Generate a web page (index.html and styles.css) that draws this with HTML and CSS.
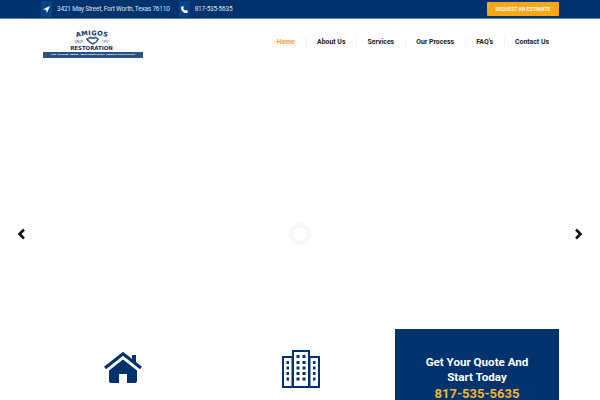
FILE: index.html
```html
<!DOCTYPE html>
<html lang="en">
<head>
  <meta charset="UTF-8">
  <meta name="viewport" content="width=device-width, initial-scale=1.0">
  <title>Amigos Restoration</title>
  <link rel="stylesheet" href="styles.css">
</head>
<body>
  <div class="topbar">
    <div class="topbar-info">
      <span class="top-icon">
        <svg width="7" height="7" viewBox="0 0 10 10"><path d="M10 0 0 4.600l4.400.9L5.600 10z" fill="#fff"/></svg>
      </span>
      <span class="top-text address">3421 May Street, Fort Worth, Texas 76110</span>
      <span class="top-icon">
        <svg width="7" height="7" viewBox="0 0 10 10"><path d="M1 .6 3 0l1.200 2.600-1 1a6 6 0 0 0 3.200 3.200l1-1L10 7l-.6 2c-.2.6-.7 1-1.400 1C3.600 10 0 6.400 0 2 0 1.300.4.800 1 .6z" fill="#fff"/></svg>
      </span>
      <span class="top-text">817-535-5635</span>
    </div>
    <a class="estimate-btn" href="#">REQUEST AN ESTIMATE</a>
  </div>

  <header class="header">
    <a class="logo" href="#">
      <svg class="logo-arc" width="40" height="12" viewBox="0 0 40 12">
        <path id="logoArc" d="M3 10.500Q20 6 37 10.500" fill="none"/>
        <text class="logo-name" text-anchor="middle"><textPath href="#logoArc" startOffset="50%">AMIGOS</textPath></text>
      </svg>
      <span class="logo-mid">
        <span class="logo-since">SINCE</span>
        <svg width="13" height="9" viewBox="0 0 15 9"><path d="M1 3 5 1l3 1 3-1 3 2-2 3-4 2.500L4 6z" fill="#fff" stroke="#3f5f86" stroke-width="1.800"/></svg>
        <span class="logo-since">1997</span>
      </span>
      <span class="logo-title">RESTORATION</span>
      <span class="logo-strip">FIRE · ICE DAM · SMOKE · MOLD REMEDIATION · GENERAL CONTRACTING</span>
    </a>
    <nav class="nav">
      <a class="nav-link active" href="#">Home</a>
      <a class="nav-link" href="#">About Us</a>
      <a class="nav-link" href="#">Services</a>
      <a class="nav-link" href="#">Our Process</a>
      <a class="nav-link" href="#">FAQ's</a>
      <a class="nav-link" href="#">Contact Us</a>
    </nav>
  </header>

  <section class="slider">
    <svg class="arrow" width="9" height="12" viewBox="0 0 9 12"><path d="M7 1.500 2.500 6 7 10.500" fill="none" stroke="#111" stroke-width="2.600"/></svg>
    <div class="loader"></div>
    <svg class="arrow" width="9" height="12" viewBox="0 0 9 12"><path d="M2 1.500 6.500 6 2 10.500" fill="none" stroke="#111" stroke-width="2.600"/></svg>
  </section>

  <section class="features">
    <div class="feature">
      <svg width="38" height="31" viewBox="0 0 38 31">
        <path d="M1 16 19 1.800 37 16" fill="none" stroke="#03336e" stroke-width="3.200"/>
        <path d="M28 3h4v8l-4-3z" fill="#03336e"/>
        <path d="M5 18.500 19 7.500l14 11V29a2 2 0 0 1-2 2h-8v-9h-8v9H7a2 2 0 0 1-2-2z" fill="#03336e"/>
      </svg>
    </div>
    <div class="feature tall">
      <svg width="38" height="38" viewBox="0 0 38 38">
        <path d="M0 38V6h10V0h18v6h10v32z" fill="#03336e"/>
        <path d="M2 8h7.500v28H2zM12 2h14v34H12zM28.500 8H36v28h-7.500z" fill="#fff"/>
        <path d="M4.500 11h2.500v3H4.500zM4.500 16.500h2.500v3H4.500zM4.500 22h2.500v3H4.500zM4.500 27.500h2.500v3H4.500zM31 11h2.500v3H31zM31 16.500h2.500v3H31zM31 22h2.500v3H31zM31 27.500h2.500v3H31zM14.500 5h3v3h-3zM20.500 5h3v3h-3zM14.500 11h3v3h-3zM20.500 11h3v3h-3zM14.500 16.500h3v3h-3zM20.500 16.500h3v3h-3zM14.500 22h3v3h-3zM20.500 22h3v3h-3zM14.500 27.500h3v3h-3zM20.500 27.500h3v3h-3z" fill="#03336e"/>
      </svg>
    </div>
    <div class="quote">
      <h2 class="quote-title">Get Your Quote And Start Today</h2>
      <a class="quote-phone" href="#">817-535-5635</a>
    </div>
  </section>
</body>
</html>
```

FILE: styles.css
```css
html, body {
    height: 400px;
    overflow: hidden;
}
body {
    margin: 0;
    background-color: white;
    font-family: Roboto, Arial, sans-serif;
    color: #111;
}
a {
    text-decoration: none;
}
.topbar {
    display: flex;
    justify-content: space-between;
    align-items: center;
    box-sizing: border-box;
    height: 19px;
    padding: 0 41px;
    background-color: #03336e;
    border-bottom: 1px solid #5f80aa;
}
.topbar-info {
    display: flex;
    align-items: center;
}
.top-icon {
    display: flex;
    align-items: center;
    justify-content: center;
    width: 11px;
    height: 16px;
    background-color: #0b4485;
    margin-right: 5px;
}
.top-text {
    font-size: 6.500px;
    letter-spacing: -.2px;
    color: #d8e1ec;
}
.address {
    margin-right: 9px;
}
.estimate-btn {
    width: 72px;
    height: 14px;
    line-height: 14px;
    margin-top: -1px;
    text-align: center;
    font-size: 5px;
    font-weight: 700;
    color: #fff;
    background-color: #f9a61a;
    border-radius: 1px;
}
.header {
    display: flex;
    justify-content: space-between;
    align-items: center;
    height: 46px;
    padding: 0 51px 0 43px;
}
.logo {
    display: flex;
    flex-direction: column;
    align-items: center;
    width: 100px;
    color: #2f4f7c;
}
.logo-arc {
    display: block;
    margin: 0 3px -3px 0;
}
.logo-name {
    font-family: "DejaVu Sans", sans-serif;
    font-size: 6.500px;
    font-weight: 700;
    letter-spacing: .4px;
    fill: #03336e;
}
.logo-mid {
    display: flex;
    align-items: center;
    gap: 3px;
    margin-right: 3px;
    font-size: 3px;
    line-height: 4px;
}
.logo-since {
    padding-top: 3px;
}
.logo-title {
    margin-right: 3px;
    font-family: "DejaVu Sans", sans-serif;
    font-size: 5.400px;
    font-weight: 700;
    line-height: 6px;
    color: #03336e;
}
.logo-strip {
    align-self: stretch;
    margin-top: 1px;
    height: 6px;
    line-height: 6px;
    font-size: 2.500px;
    font-weight: 700;
    text-align: center;
    white-space: nowrap;
    overflow: hidden;
    color: #fff;
    background-color: #2a5285;
}
.nav {
    display: flex;
    gap: 11px;
}
.nav-link {
    font-size: 6.900px;
    font-weight: 700;
    color: #1a1a1a;
}
.nav-link + .nav-link {
    padding-left: 10px;
    border-left: 1px solid #f1f1f1;
}
.nav-link.active {
    color: #f9a61a;
}
.slider {
    display: flex;
    justify-content: space-between;
    align-items: center;
    box-sizing: border-box;
    height: 264px;
    padding: 74px 17px 0;
}
.loader {
    box-sizing: border-box;
    width: 20px;
    height: 20px;
    border: 3px solid #f6f6f6;
    border-radius: 50%;
    box-shadow: 0 0 3px #eee;
}
.features {
    display: grid;
    grid-template-columns: 163px 191px 164px;
    height: 71px;
    padding-left: 41px;
}
.feature {
    display: flex;
    justify-content: center;
    align-items: flex-start;
    padding-top: 23px;
}
.feature.tall {
    padding: 21px 0 0 2px;
}
.quote {
    box-sizing: border-box;
    height: 71px;
    padding-top: 26px;
    text-align: center;
    background-color: #03336e;
}
.quote-title {
    margin: 0 auto;
    width: 130px;
    font-size: 11.600px;
    font-weight: 700;
    line-height: 15px;
    color: #fff;
}
.quote-phone {
    display: block;
    margin-top: 2px;
    font-size: 13px;
    line-height: 13px;
    font-weight: 700;
    color: #eeb52f;
}
```
